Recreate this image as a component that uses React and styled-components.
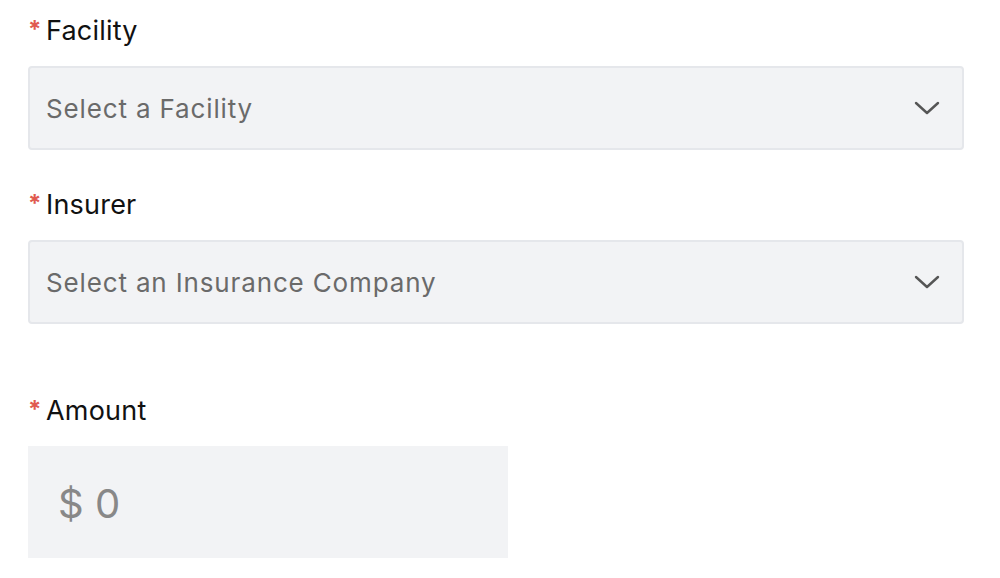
import React from 'react';
import styled, { createGlobalStyle } from 'styled-components';

const GlobalStyle = createGlobalStyle`
  body {
    margin: 0;
    background: #ffffff;
    font-family: Inter, "Noto Sans", sans-serif;
  }
`;

const fields = [
  { label: 'Facility', placeholder: 'Select a Facility' },
  { label: 'Insurer', placeholder: 'Select an Insurance Company' },
];

const Chevron = () => (
  <svg width="26" height="14" viewBox="0 0 26 14" fill="none">
    <path d="M2 2l11 10L24 2" stroke="#555" strokeWidth="2.4" strokeLinecap="round" strokeLinejoin="round" />
  </svg>
);

const App = () => {
  return (
    <>
      <GlobalStyle />
      <Form>
        {fields.map((f) => (
          <Field key={f.label}>
            <Label><Star>*</Star>{f.label}</Label>
            <Select>
              <Placeholder>{f.placeholder}</Placeholder>
              <Chevron />
            </Select>
          </Field>
        ))}
        <Field $spaced>
          <Label><Star>*</Star>Amount</Label>
          <AmountBox>$ 0</AmountBox>
        </Field>
      </Form>
    </>
  );
};

export default App;

const Form = styled.div`
  padding: 12px 36px 0 28px;
  display: flex;
  flex-direction: column;
  gap: 36px;
`;

const Field = styled.div`
  display: flex;
  flex-direction: column;
  gap: 18px;
  margin-top: ${(p) => (p.$spaced ? '32px' : '0')};
`;

const Label = styled.div`
  display: flex;
  align-items: center;
  height: 36px;
  font-size: 27px;
  color: #111;
  letter-spacing: 0.2px;
`;

const Star = styled.span`
  color: #e05a4f;
  font-size: 24px;
  font-weight: 700;
  margin-right: 8px;
  align-self: flex-start;
  margin-top: 3px;
  width: 10px;
`;

const Select = styled.div`
  box-sizing: border-box;
  height: 84px;
  width: 936px;
  background: #f2f3f5;
  border: 2px solid #e5e7eb;
  border-radius: 4px;
  display: flex;
  align-items: center;
  justify-content: space-between;
  padding: 0 22px 0 16px;
`;

const Placeholder = styled.span`
  font-size: 26px;
  color: #6a6a6a;
  letter-spacing: 0.85px;
`;

const AmountBox = styled.div`
  box-sizing: border-box;
  width: 480px;
  height: 112px;
  background: #f2f3f5;
  display: flex;
  align-items: center;
  padding-left: 30px;
  padding-top: 2px;
  font-size: 40px;
  color: #888;
`;
